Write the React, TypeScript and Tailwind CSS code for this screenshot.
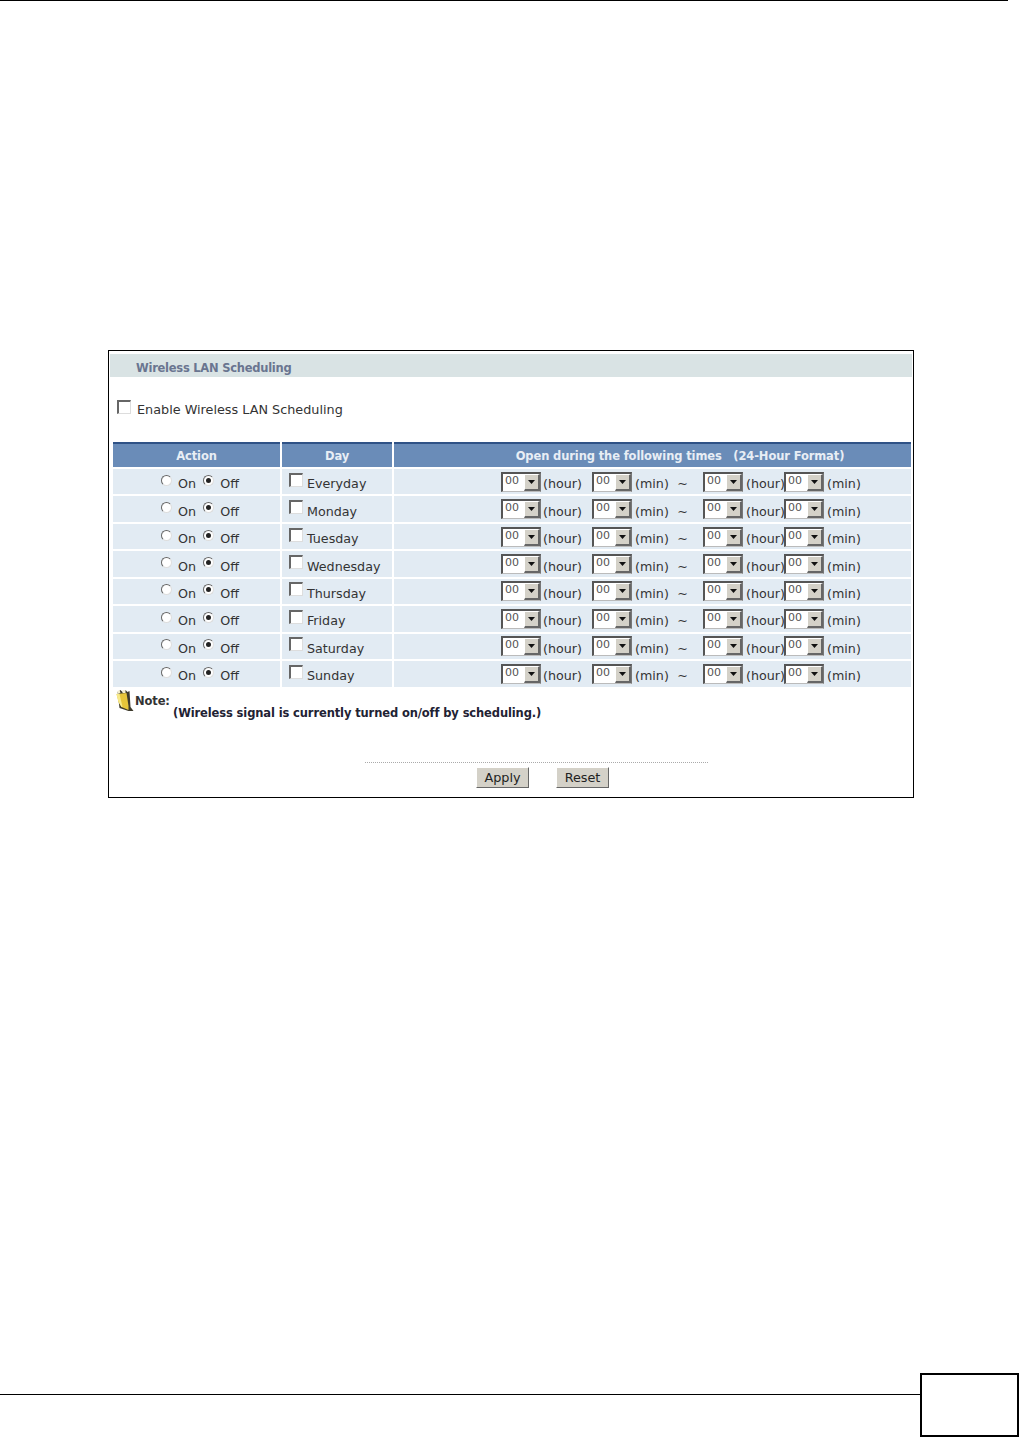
const DAYS = ["Everyday", "Monday", "Tuesday", "Wednesday", "Thursday", "Friday", "Saturday", "Sunday"];

function TimeSelect() {
  return (
    <div className="w-[40px] h-[20px] -mt-[4px] flex items-stretch border-t-2 border-l-2 border-[#555] border-r border-b border-r-[#777] border-b-[#bbb] bg-white shrink-0">
      <span className="flex-1 text-[11px] leading-[14px] pl-[2px] text-[#555]">00</span>
      <span className="w-[16px] bg-[#d4d1c8] border-t border-l border-white border-r-2 border-b-2 border-r-[#666] border-b-[#666] flex items-center justify-center">
        <svg width="7" height="4" viewBox="0 0 7 4">
          <path d="M0 0h7L3.5 4z" fill="#111" />
        </svg>
      </span>
    </div>
  );
}

function Checkbox() {
  return <div className="w-[14px] h-[14px] shrink-0 bg-white border-t-2 border-l-2 border-[#666] border-r border-b border-r-[#ddd] border-b-[#ddd]" />;
}

function Radio({ checked }: { checked?: boolean }) {
  return (
    <div className="w-[11px] h-[11px] rounded-full bg-white border border-[#666] border-r-[#ddd] border-b-[#ddd] flex items-center justify-center shrink-0">
      {checked && <div className="w-[5px] h-[5px] rounded-full bg-[#222]" />}
    </div>
  );
}

function Row({ day }: { day: string }) {
  return (
    <div className="flex gap-[2px] h-[25.45px] mb-[2px] text-[#333] text-[12.7px]">
      <div className="w-[167px] bg-[#e2ebf3] flex items-center justify-center pt-[4px]">
        <div className="flex items-center pl-[7px]">
          <div className="-mt-[7px]"><Radio /></div>
          <span className="ml-[6px]">On</span>
          <div className="ml-[7px] -mt-[7px]"><Radio checked /></div>
          <span className="ml-[6px]">Off</span>
        </div>
      </div>
      <div className="w-[110px] bg-[#e2ebf3] flex items-center pl-[7px] pt-[4px]">
        <div className="-mt-[8px]"><Checkbox /></div>
        <span className="ml-[4px]">{day}</span>
      </div>
      <div className="flex-1 bg-[#e2ebf3] flex items-center pl-[107px] pt-[4px]">
        <TimeSelect />
        <span className="w-[51px] pl-[2px]">(hour)</span>
        <TimeSelect />
        <span className="w-[71px] pl-[3px] flex justify-between pr-[15px]"><span>(min)</span><span>~</span></span>
        <TimeSelect />
        <span className="w-[41px] pl-[3px]">(hour)</span>
        <TimeSelect />
        <span className="pl-[3px]">(min)</span>
      </div>
    </div>
  );
}

export default function App() {
  return (
    <div className="relative w-[1020px] h-[1438px] bg-white overflow-hidden font-['DejaVu_Sans',sans-serif]">
      <div className="h-px w-[1008px] bg-black" />

      {/* Scheduling panel */}
      <div className="mt-[349px] ml-[108px] w-[806px] h-[448px] border border-black pt-[3px] px-[1px]">
        <div className="h-[23px] bg-[#d9e3e4] pl-[26px] pt-[7px] flex items-center text-[11.5px] tracking-[-0.25px] font-bold text-[#6a7590]">
          Wireless LAN Scheduling
        </div>

        <div className="flex items-center mt-[24px] pl-[7px] text-[12.8px] text-[#333] h-[18px]">
          <div className="-mt-[6px]"><Checkbox /></div>
          <span className="ml-[6px]">Enable Wireless LAN Scheduling</span>
        </div>

        <div className="ml-[3px] mr-[1px] mt-[23px] flex gap-[2px] h-[25px] text-[11.5px] tracking-[-0.12px] font-bold text-[#e8eef5]">
          <div className="w-[167px] bg-[#6a8cb8] border-t-2 border-[#2f5286] flex items-center justify-center pt-[2px]">Action</div>
          <div className="w-[110px] bg-[#6a8cb8] border-t-2 border-[#2f5286] flex items-center justify-center pt-[2px]">Day</div>
          <div className="flex-1 bg-[#6a8cb8] border-t-2 border-[#2f5286] flex items-center justify-center pl-[55px] pt-[2px] whitespace-pre">Open during the following times   (24-Hour Format)</div>
        </div>

        <div className="ml-[3px] mr-[1px] mt-[2px]">
          {DAYS.map((d) => (
            <Row key={d} day={d} />
          ))}
        </div>

        <div className="flex mt-[1px] pl-[4px] h-[36px]">
          <svg width="21" height="23" viewBox="0 0 20 23" className="shrink-0">
            <path d="M3 3l3-2 2 2 3-2 2 2 2-1 1 16 3 4-5 0-9-3z" fill="#3d3a2c" />
            <path d="M2 5l10-1 2 13 0 4-7-3-3-5z" fill="#e6c53a" />
            <path d="M2 5l3 0 3 13-1 0-3-5z" fill="#f7e98a" />
            <path d="M3 2l2-1 1 3-3 1zM8 1l3 0 0 3-3 0z" fill="#f4efd0" />
          </svg>
          <div className="text-[11.5px] tracking-[-0.12px] font-bold text-[#333] leading-[12.5px] pt-[6px]">
            <div>Note:</div>
            <div className="pl-[38px] text-[#223] whitespace-nowrap">(Wireless signal is currently turned on/off by scheduling.)</div>
          </div>
        </div>

        <div className="ml-[255px] mt-[37px] w-[343px] border-t border-dotted border-[#aaa]" />

        <div className="flex gap-[27px] mt-[4px] ml-[366px]">
          <button className="w-[53px] h-[21px] bg-[#d4d1c8] border border-t-white border-l-white border-r-[#666] border-b-[#666] text-[12.8px] text-[#222]">Apply</button>
          <button className="w-[53px] h-[21px] bg-[#d4d1c8] border border-t-white border-l-white border-r-[#666] border-b-[#666] text-[12.8px] text-[#222]">Reset</button>
        </div>
      </div>

      <div className="absolute left-0 top-[1394px] w-[920px] h-px bg-black" />
      <div className="absolute left-[920px] top-[1373px] w-[99px] h-[64px] border-2 border-black bg-white" />
    </div>
  );
}
